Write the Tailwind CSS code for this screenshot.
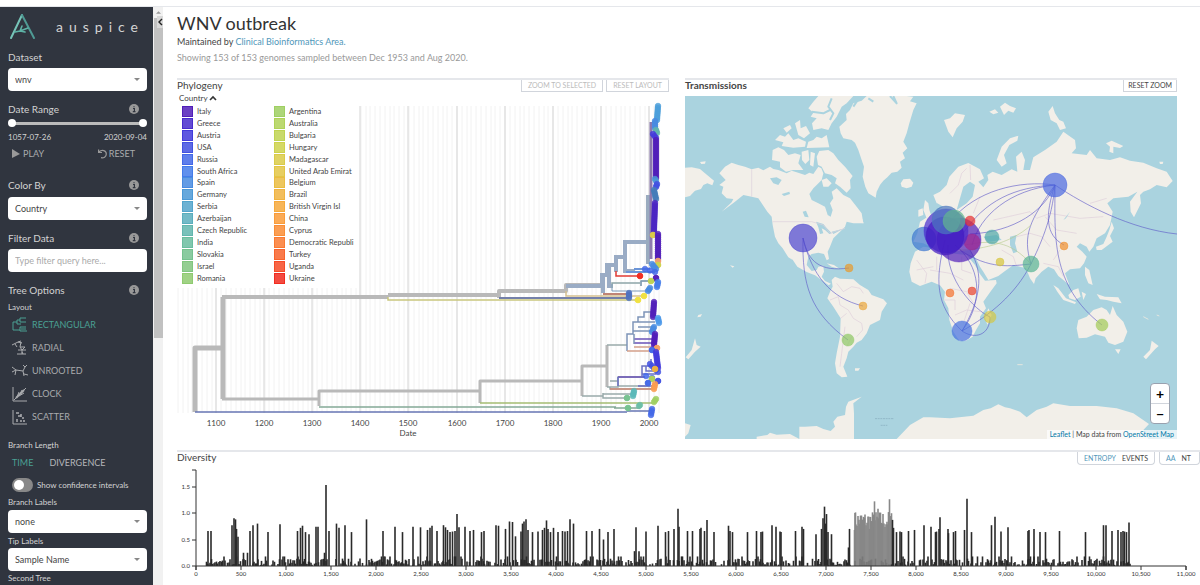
<!DOCTYPE html>
<html lang="en">
<head>
    <meta charset="UTF-8">
    <meta name="viewport" content="width=device-width, initial-scale=1.0">
    <title>auspice - WNV outbreak</title>
    <script src="https://cdn.jsdelivr.net/npm/@tailwindcss/browser@4"></script>
</head>
<body class="bg-white font-['Lato',sans-serif] text-[#444] h-screen overflow-hidden flex flex-col">
    <div class="h-[7px] shrink-0 border-b border-gray-200"></div>

    <div class="flex flex-1 min-h-0">
        <!-- Sidebar -->
        <aside class="w-[153px] shrink-0 overflow-hidden bg-[#30353f] px-2 pr-[6px] text-[#d3d3d3]">
            <div class="h-10 flex items-center">
                <svg class="w-7 h-8 shrink-0" viewBox="0 0 28 32" fill="none" stroke-linecap="round" stroke-linejoin="round">
                    <path d="M3 27L14 4" stroke="#76c4b8" stroke-width="2"/>
                    <path d="M14 4L26 27" stroke="#4f9a94" stroke-width="2"/>
                    <path d="M7 21L12 20L20 17M14 15L12 20L17 21" stroke="#5eb3a6" stroke-width="1.6"/>
                </svg>
                <span class="ml-5 text-sm leading-4 tracking-[6px]">auspice</span>
            </div>

            <label for="dataset" class="flex h-5 items-center text-[10px]">Dataset</label>
            <div class="relative mt-px">
                <select id="dataset" class="block w-full h-[23px] appearance-none rounded-sm bg-white pl-[7px] text-[9px] text-[#444]"><option>wnv</option></select>
                <svg class="pointer-events-none absolute right-[7px] top-[10px] w-[6px] h-[3px]" viewBox="0 0 6 3"><path d="M0 0H6L3 3Z" fill="#888"/></svg>
            </div>

            <div class="mt-2 flex h-5 items-center justify-between pr-2 text-[10px]">
                <h2>Date Range</h2>
                <svg class="w-[10px] h-[10px]" viewBox="0 0 10 10"><circle cx="5" cy="5" r="5" fill="#999"/><path d="M4 4.5H5.4V7.5M3.8 7.7H6.5M5 2.2V3.3" stroke="#30353f" stroke-width="1.2" fill="none"/></svg>
            </div>
            <div class="relative h-2">
                <div class="absolute inset-x-1 top-[3px] h-[3px] bg-[#bbb]"></div>
                <input type="range" aria-label="Start date" min="0" max="100" value="0" class="pointer-events-none absolute inset-0 h-2 w-full appearance-none bg-transparent [&::-webkit-slider-thumb]:pointer-events-auto [&::-webkit-slider-thumb]:h-2 [&::-webkit-slider-thumb]:w-2 [&::-webkit-slider-thumb]:appearance-none [&::-webkit-slider-thumb]:rounded-full [&::-webkit-slider-thumb]:bg-white">
                <input type="range" aria-label="End date" min="0" max="100" value="100" class="pointer-events-none absolute inset-0 h-2 w-full appearance-none bg-transparent [&::-webkit-slider-thumb]:pointer-events-auto [&::-webkit-slider-thumb]:h-2 [&::-webkit-slider-thumb]:w-2 [&::-webkit-slider-thumb]:appearance-none [&::-webkit-slider-thumb]:rounded-full [&::-webkit-slider-thumb]:bg-white">
            </div>
            <div class="mt-1 flex h-3 items-center justify-between text-[8px]"><span>1057-07-26</span><span>2020-09-04</span></div>
            <div class="mt-[3px] flex h-4 items-center justify-between pl-1 pr-3 text-[9px] text-[#a9abae]">
                <button class="flex items-center gap-[3px]"><svg class="w-2 h-[10px]" viewBox="0 0 8 10"><path d="M0 0L8 5L0 9Z" fill="#999"/></svg>PLAY</button>
                <button class="flex items-center gap-[2px]"><svg class="w-[9px] h-[10px]" viewBox="0 0 9 10" fill="none" stroke="#999" stroke-width="1.2"><path d="M0.6 0.5V3.5H4M1 3C4 0 8.3 1.5 8.3 5C8.3 8 5.5 9.2 3 8.7"/></svg>RESET</button>
            </div>

            <div class="mt-[13px] flex h-5 items-center justify-between pr-2 text-[10px]">
                <label for="color-by">Color By</label>
                <svg class="w-[10px] h-[10px]" viewBox="0 0 10 10"><circle cx="5" cy="5" r="5" fill="#999"/><path d="M4 4.5H5.4V7.5M3.8 7.7H6.5M5 2.2V3.3" stroke="#30353f" stroke-width="1.2" fill="none"/></svg>
            </div>
            <div class="relative mt-[2px]">
                <select id="color-by" class="block w-full h-[23px] appearance-none rounded-sm bg-white pl-[7px] text-[9px] text-[#444]"><option>Country</option></select>
                <svg class="pointer-events-none absolute right-[7px] top-[10px] w-[6px] h-[3px]" viewBox="0 0 6 3"><path d="M0 0H6L3 3Z" fill="#888"/></svg>
            </div>

            <div class="mt-2 flex h-5 items-center justify-between pr-2 text-[10px]">
                <label for="filter">Filter Data</label>
                <svg class="w-[10px] h-[10px]" viewBox="0 0 10 10"><circle cx="5" cy="5" r="5" fill="#999"/><path d="M4 4.5H5.4V7.5M3.8 7.7H6.5M5 2.2V3.3" stroke="#30353f" stroke-width="1.2" fill="none"/></svg>
            </div>
            <input id="filter" type="text" placeholder="Type filter query here..." class="mt-px block w-full h-[23px] rounded-sm bg-white px-[7px] text-[9px] placeholder:text-[#aaa]">

            <div class="mt-2 flex h-5 items-center justify-between pr-2 text-[10px]">
                <h2>Tree Options</h2>
                <svg class="w-[10px] h-[10px]" viewBox="0 0 10 10"><circle cx="5" cy="5" r="5" fill="#999"/><path d="M4 4.5H5.4V7.5M3.8 7.7H6.5M5 2.2V3.3" stroke="#30353f" stroke-width="1.2" fill="none"/></svg>
            </div>
            <h3 class="mt-px flex h-3 items-center text-[8px]">Layout</h3>
            <div class="pl-1 text-[9px] text-[#a9abae]">
                <button class="flex h-[23px] w-full items-center gap-1 text-[#4aa093]">
                    <svg class="w-4 h-4" viewBox="0 0 16 16" fill="none" stroke="currentColor"><path d="M5 5H1V13H5M5 3V7M5 3H8V1H14M8 3V5H14M5 7H9M5 13H8M8 10V14M8 10H14M8 14H15M9 12H14"/></svg>RECTANGULAR
                </button>
                <button class="flex h-[23px] w-full items-center gap-1">
                    <svg class="w-4 h-4" viewBox="0 0 16 16" fill="none" stroke="currentColor"><path d="M0 5L6 2L10 3M6 2L9 1M3 4L5 7M9 2L8 7H13M8 7L10 10V14M5 14H14M6 10H14M10 10L13 7M11 14L10 12"/></svg>RADIAL
                </button>
                <button class="flex h-[23px] w-full items-center gap-1">
                    <svg class="w-4 h-4" viewBox="0 0 16 16" fill="none" stroke="currentColor"><path d="M0 4L4 7L3 12M4 7L11 8M11 8L13 4L15 2M13 4L11 2M11 8L12 13M12 11L16 12M0 9L4 7"/></svg>UNROOTED
                </button>
                <button class="flex h-[23px] w-full items-center gap-1">
                    <svg class="w-4 h-4" viewBox="0 0 16 16" fill="none" stroke="currentColor"><path d="M1 1V15H15M2 14L14 2M5 11L7 6M8 8L10 4M7 10L12 7"/><path d="M4 12L12 4" stroke-width="2"/></svg>CLOCK
                </button>
                <button class="flex h-[23px] w-full items-center gap-1">
                    <svg class="w-4 h-4" viewBox="0 0 16 16" fill="none" stroke="currentColor"><path d="M1 1V15H15"/><path d="M4 4H7M6 7H9M9 5V8M10 9H12M4 12H6M8 12H10M12 11V13M5 10V11" stroke-width="1.6"/></svg>SCATTER
                </button>
            </div>

            <h3 class="mt-[11px] flex h-3 items-center text-[8px]">Branch Length</h3>
            <div class="mt-1 flex h-4 items-center gap-4 pl-1 text-[9px] text-[#b5b7ba]">
                <button class="text-[#4aa093]">TIME</button>
                <button>DIVERGENCE</button>
            </div>
            <div class="mt-[7px] flex h-[14px] items-center gap-1 pl-1">
                <input id="confidence" type="checkbox" class="relative h-[14px] w-[21px] appearance-none rounded-full bg-[#888] before:absolute before:left-[2px] before:top-[2px] before:h-[10px] before:w-[10px] before:rounded-full before:bg-white checked:before:left-[9px]">
                <label for="confidence" class="text-[8px]">Show confidence intervals</label>
            </div>
            <label for="branch-labels" class="mt-1 flex h-3 items-center text-[8px]">Branch Labels</label>
            <div class="relative mt-[2px]">
                <select id="branch-labels" class="block w-full h-[23px] appearance-none rounded-sm bg-white pl-[7px] text-[9px] text-[#444]"><option>none</option></select>
                <svg class="pointer-events-none absolute right-[7px] top-[10px] w-[6px] h-[3px]" viewBox="0 0 6 3"><path d="M0 0H6L3 3Z" fill="#888"/></svg>
            </div>
            <label for="tip-labels" class="mt-[2px] flex h-3 items-center text-[8px]">Tip Labels</label>
            <div class="relative mt-px">
                <select id="tip-labels" class="block w-full h-[23px] appearance-none rounded-sm bg-white pl-[7px] text-[9px] text-[#444]"><option>Sample Name</option></select>
                <svg class="pointer-events-none absolute right-[7px] top-[10px] w-[6px] h-[3px]" viewBox="0 0 6 3"><path d="M0 0H6L3 3Z" fill="#888"/></svg>
            </div>
            <h3 class="mt-px flex h-3 items-center text-[8px]">Second Tree</h3>
        </aside>

        <!-- Scrollbar and collapse handle -->
        <div class="relative w-[10px] shrink-0 bg-[#f1f1f1]">
            <svg class="absolute left-[3px] top-1 w-[5px] h-[3px]" viewBox="0 0 6 3"><path d="M0 3H6L3 0Z" fill="#999"/></svg>
            <div class="mt-[11px] ml-px h-[320px] bg-[#c1c1c1]"></div>
            <button class="absolute right-0 top-[9px] h-3 w-[6px] bg-[#d8d8d8]" aria-label="Collapse sidebar"><svg viewBox="0 0 6 12" fill="none" stroke="#222" stroke-width="1.4"><path d="M5 3L2 6L5 9"/></svg></button>
        </div>

        <!-- Main -->
        <main class="min-w-0 flex-1 overflow-hidden pl-[14px]">
            <header class="h-[71px] pt-1">
                <h1 class="text-[18px] leading-6 text-[#333]">WNV outbreak</h1>
                <p class="mt-px text-[9px] leading-3">Maintained by <a href="#" class="text-[#5097ba]">Clinical Bioinformatics Area.</a></p>
                <p class="mt-1 text-[9px] leading-3 text-[#999]">Showing 153 of 153 genomes sampled between Dec 1953 and Aug 2020.</p>
            </header>

            <div class="mr-[23px] grid grid-cols-2 gap-4">
                <section class="border-t-2 border-gray-200">
                    <div class="flex h-4 items-start justify-between">
                        <h2 class="text-[10px] leading-[11px]">Phylogeny</h2>
                        <div class="flex gap-[3px] text-[7px] text-[#bbb]">
                            <button class="h-3 border border-t-0 border-gray-300 px-[6px]">ZOOM TO SELECTED</button>
                            <button class="h-3 border border-t-0 border-gray-300 px-[6px]">RESET LAYOUT</button>
                        </div>
                    </div>
                    <svg id="tree" class="block h-auto w-full overflow-visible" viewBox="177 96 492 343" font-size="8" fill="#444">
                        <g id="grid"></g>
                        <rect x="177" y="96" width="180" height="192" fill="#fff"/>
                        <g id="legend" font-size="7.5"></g>
                        <text x="179" y="101">Country</text>
                        <path d="M210 100L213 97L216 100" fill="none" stroke="#333" stroke-width="1.6"/>
                        <g fill="none" stroke="#b9b9b9" stroke-linejoin="round">
                            <path d="M195 412V348H223M223 348V297" stroke-width="5"/>
                            <path d="M223 348V399" stroke-width="5"/>
                            <path d="M222 297H388M388 295H499" stroke-width="4"/>
                            <path d="M222 399H319M319 406V391H480M480 403V381H582M582 396V366H607V345M607 366V387" stroke-width="3"/>
                            <path d="M499 298V291H566V285H602" stroke-width="4"/>
                        </g>
                        <g fill="none" stroke-width="1.5">
                            <path d="M195 412H627M627 411H650" stroke="#6775b4"/>
                            <path d="M319 407H616M614 408H640" stroke="#84a996"/>
                            <path d="M480 403H655" stroke="#a5bd72"/>
                            <path d="M388 297V300H638" stroke="#c9c67d"/>
                            <path d="M566 291V296H644" stroke="#d5c08f"/>
                            <path d="M499 298H629" stroke="#7480aa" stroke-width="2"/>
                            <path d="M607 345H627M582 396H603M603 393V398H625M603 394H636M607 387H618V377H645M610 387V389H655M610 381H618V386H650" stroke="#9aa"/>
                            <path d="M610 389H655" stroke="#d08a75"/>
                            <path d="M618 377H645M634 339H655M634 343H655" stroke="#6a52b8"/>
                            <path d="M627 351V334H633V322H638V317H644V312H653M638 322H655M638 327H652M633 331H652M634 334V344" stroke="#7d94b8"/>
                            <path d="M627 351H654M634 347H655" stroke="#d3a08a"/>
                            <path d="M618 377V386M642 378V366H651V359M642 374H656M646 366V371H657M638 386H655" stroke="#6a70c4"/>
                            <path d="M612 288V283H640M641 286V281H655" stroke="#8da5a8"/>
                        </g>
                        <g fill="none" stroke="#9aacc5" stroke-width="4">
                            <path d="M566 286H602V275H607V265H616V257H625V242H648M603 277V293M609 266V288M616 258V272M625 243V271H635"/>
                            <path d="M648 264V195" stroke="#9aabbf"/>
                            <path d="M651 259V122" stroke="#8d7aae" stroke-width="3"/>
                        </g>
                        <g fill="none">
                            <path d="M616 271V276H640" stroke="#e23b34" stroke-width="1.5"/>
                            <path d="M603 294H630" stroke="#c08476" stroke-width="2"/>
                            <path d="M626 272H655M634 269H650M640 272H655" stroke="#6b95d8" stroke-width="2"/>
                            <path d="M641 286V281H655M612 284V291H650" stroke="#7b98b8"/>
                        </g>
                        <g id="tips"></g>
                        <g id="years" text-anchor="middle"></g>
                        <text x="408" y="436" text-anchor="middle">Date</text>
                    </svg>
                </section>

                <section class="relative border-t-2 border-gray-200">
                    <div class="flex h-4 items-start justify-between">
                        <h2 class="text-[10px] font-bold leading-[11px]">Transmissions</h2>
                        <button class="h-3 border border-t-0 border-gray-300 px-1 text-[7px]">RESET ZOOM</button>
                    </div>
                    <svg class="block h-auto w-full bg-[#aad3df]" viewBox="0 0 1476 1029" stroke-linejoin="round">
                        <!-- Americas, Greenland, north Atlantic -->
                        <g transform="translate(-15 -78)" fill="#f2efe9">
                            <path d="M118 310L135 290L155 278L175 285L195 290L215 298L235 293L250 301L270 290L280 297L295 300L320 310L335 302L350 307L375 315L388 308L400 312L415 290L424 295L430 310L425 330L410 345L400 355L388 372L395 390L415 400L435 410L443 435L452 440L458 420L450 400L460 385L455 365L470 355L490 375L510 385L530 410L545 430L550 460L520 460L500 455L495 470L480 485L460 505L450 530L443 545L447 567L440 571L432 552L415 548L395 552L385 560L380 585L395 603L410 600L415 590L430 588L432 605L425 620L435 633L453 641L446 646L425 630L405 616L380 606L352 590L335 565L322 543L338 570L325 562L308 535L295 520L285 500L278 465L275 440L262 425L245 400L235 385L215 380L190 375L165 395L125 425L155 397L160 387L140 385L125 370L130 350L118 345L137 330Z"/>
                            <path d="M15 293L35 292L60 297L75 310L85 318L102 332L97 346L82 340L70 345L63 357L45 362L30 378L15 382ZM60 276L77 274L75 281L64 282Z"/>
                            <path d="M560 78L545 92L520 100L510 120L498 132L500 150L478 170L482 190L490 205L515 210L525 218L535 240L545 270L552 290L548 320L556 350L565 370L587 383L590 365L600 345L610 332L622 322L635 308L652 305L665 293L660 275L675 265L668 248L682 235L670 215L680 190L688 160L700 120L710 100L690 94L700 80L680 78Z"/>
                            <path d="M385 115L400 95L415 78L520 78L500 100L485 110L470 140L455 160L445 180L425 175L400 180L396 160L410 145L392 140L400 128Z"/>
                            <path d="M440 195L448 232L380 234L385 215L400 210L410 200L425 205ZM285 210L300 195L315 200L325 190L340 210L355 205L378 215L375 230L340 233L305 228L310 217ZM310 175L330 165L335 175L320 188ZM345 160L360 150L362 175L378 168L390 190L372 205L355 195ZM278 240L295 232L312 240L325 255L345 250L362 255L355 280L370 300L340 300L318 305L300 292L300 275L276 270ZM365 245L385 240L388 270L376 282L366 270ZM392 245L405 250L400 290L390 285Z"/>
                            <path d="M410 260L418 243L445 240L460 250L475 270L495 290L518 318L510 330L512 355L500 368L480 350L465 340L470 325L455 315L435 310L425 290L414 285ZM425 330L440 325L455 340L445 350L430 350ZM530 425L540 430L551 460L530 457L522 450Z"/>
                            <path d="M662 340L670 328L690 326L700 338L695 350L680 355L665 350ZM735 390L745 400L748 420L755 440L740 445L730 420ZM715 420L728 415L730 435L715 440Z"/>
                            <!-- Great lakes and Canadian lakes -->
                            <path d="M408 455L430 462L440 474L455 490L448 492L435 480L425 475L430 490L420 492L415 472ZM455 485L490 476L460 492ZM270 325L290 322L305 330L295 345L280 340ZM305 372L328 365L330 372L312 378ZM368 425L378 422L386 442L374 440Z" fill="#aad3df"/>
                            <path d="M395 125L430 130L450 120M455 85L445 110L460 130L450 150M475 145L465 175M540 80L520 110M565 85L580 95M630 78L650 100L640 78" fill="none" stroke="#aad3df" stroke-width="6"/>
                            <path d="M215 298V380M278 455H395L430 465M430 465L450 490L495 475" fill="none" stroke="#ddd0dc" stroke-width="2"/>
                            <path d="M455 630L465 620L480 626L520 628L540 645L565 660L575 675L610 688L621 700L605 725L600 750L570 765L560 790L545 810L530 818L520 830L505 845L500 865L490 890L500 915L502 920L485 922L470 910L465 880L470 850L480 800L482 745L460 710L442 685L450 665L458 650ZM440 580L462 585L478 596L455 590ZM525 895H540L535 902H525Z"/>
                            <path d="M470 640L490 665L515 650L540 655L550 670M450 690L475 680L480 705L505 720L520 745L545 760L548 780L530 800M482 745L500 730M495 770L485 850L480 890M500 830L515 800" fill="none" stroke="#dfcedb" stroke-width="2"/>
                            <path d="M45 805L50 825L62 830L45 845L25 868L17 862L35 840ZM55 735L66 732L62 740L52 742ZM150 586L163 589L158 593Z"/>
                            <path d="M15 1060L32 1065L25 1090L15 1100ZM230 1107V1100L262 1095L270 1088L290 1094L330 1092L358 1107V1070H375L410 1068L430 1077L452 1083L465 1070L460 1055L472 1040L495 1035L498 1010L505 995L545 980L520 1000L522 1030V1107Z"/>
                            <path d="M585 1046H642M602 1066H622" stroke="#91b8c8" stroke-width="3" stroke-dasharray="6 2"/>
                        </g>
                        <!-- Europe, Africa, Asia, Oceania, Antarctica -->
                        <g transform="translate(735 -78)" fill="#f2efe9">
                            <path d="M20 385L30 365L50 345L58 320L85 290L115 279L150 298L162 325L145 335L160 352L175 330L172 315L188 305L215 315L245 298L262 305L258 260L275 245L285 270L280 300L300 300L310 262L345 240L380 215L400 185L435 210L438 235L425 250L470 255L480 240L500 265L540 270L570 262L600 272L640 278L680 295L710 305L728 333L710 352L680 345L660 358L640 365L630 375L633 400L612 442L602 425L600 395L622 365L595 380L550 385L532 400L548 425L540 465L525 490L500 505L490 530L478 545L470 530L450 520L440 530L457 545L470 560L462 580L450 595L420 598L405 610L418 645L400 630L385 618L372 598L355 590L335 605L317 625L312 642L300 625L288 595L250 585L222 605L205 618L175 630L160 605L150 590L140 570L120 540L60 545L20 540L-20 520L-50 515L-38 490L-30 455L10 430L55 400L40 410L22 400Z"/>
                            <path d="M-45 545L-20 530L20 535L60 550L110 555L135 585L150 612L165 632L198 630L200 640L178 670L160 695L168 715L150 740L150 760L138 780L128 800L108 812L88 812L70 785L58 750L55 715L42 690L45 665L30 646L5 635L-30 648L-55 635L-62 605L-58 580ZM165 742L175 715L185 735L172 765Z"/>
                            <path d="M200 270L215 230L240 205L265 197L262 212L238 225L222 255L230 280L215 290ZM42 150L60 145L75 130L105 135L98 155L80 175L68 202L55 185ZM355 125L368 108L375 130L388 150L400 155L408 175L390 180L380 160L362 150ZM178 125L195 118L205 128L190 133ZM210 110L225 98L240 108L258 115L250 128L235 122L222 135ZM528 220L545 212L580 228L570 234L550 230L550 250L538 245L540 230ZM688 275L700 275L698 282H690Z"/>
                            <path d="M20 400L10 375L30 365L50 395ZM545 455L552 475L540 498L548 515L535 525L515 540H500L498 530L520 522L530 500L538 480Z"/>
                            <path d="M370 645L385 655L408 685L438 697L435 702L400 690L382 665ZM415 675L430 660L445 655L452 680L435 690L418 685ZM465 590L478 600L488 645L475 640L465 615ZM455 665L468 672L460 690ZM500 672L525 680L565 682L575 700L550 695L530 690L510 688Z"/>
                            <path d="M445 750L470 740L490 720L515 712L530 720L540 735L548 708L560 735L580 755L592 785L580 815L555 825L535 818L525 800L495 793L470 803L446 805L440 775ZM555 838L572 838L565 852ZM665 812L675 820L686 828L675 838L648 868L640 860L660 840Z"/>
                            <path d="M-100 1107L-60 1065L-20 1042L0 1042L60 1045L130 1037L160 1020L182 1015L205 1003L225 1012L240 1015L270 1025L290 1042L320 1020L350 1010L370 1000L420 1008L500 1008L560 1015L610 1030L657 1062L640 1080L655 1107Z"/>
                            <path d="M60 370L85 345L95 310L110 295M120 285L122 330M150 380L130 430M190 450L235 440L300 425L320 445L360 430L420 440L450 445L520 440M260 500L300 490L335 500L360 530M215 540L250 560L260 590M345 440L380 480L440 490M390 540L370 570M0 600L60 610L100 630M40 690H75V720M60 655L110 665L130 700M75 735L110 720L150 725M-40 600L10 590M20 560V600M95 560V600L125 610M100 760L120 700M340 580L385 590L400 620M480 400L530 385M-40 570L-10 610L-15 640" fill="none" stroke="#dfcedb" stroke-width="2"/>
                            <path d="M240 500L260 495L255 520L262 545L250 550L240 525ZM160 500L200 495L215 510L175 515ZM400 450L420 425L408 445ZM100 350L120 335L135 345L128 380L110 400L80 420L90 385Z" fill="#aad3df"/>
                            <path d="M640 740L655 748M680 735L688 738M262 884H278" fill="none" stroke="#e3e6df" stroke-width="3"/>
                        </g>
                        <!-- Transmission lines and demes -->
                        <g transform="scale(3) translate(-685 -96)">
                            <g fill="none" stroke="#5a55c8" stroke-opacity=".6">
                                <path d="M803 238C802 285 810 312 848 340M803 238C812 275 830 298 863 306M803 238C808 262 820 272 849 268"/>
                                <path d="M1055 185C1020 180 975 190 950 222M1055 185C1015 187 985 200 962 235M1055 185C1010 190 980 215 972 245M1055 185C1045 210 1015 232 970 234M1055 185C1030 220 1022 235 1031 264M1055 185C1045 215 1045 235 1064 245M1055 185C1055 235 1050 285 1102 325M1055 185C1052 220 1040 245 1031 264M1055 185C1085 205 1130 229 1177 234"/>
                                <path d="M945 240C935 280 935 305 962 331M955 245C980 265 985 300 962 331M948 245C945 280 975 310 990 317M960 250C990 270 1010 266 1031 264M1031 264C1015 295 990 315 962 331M962 331C975 340 990 335 990 317M970 250C985 275 980 300 962 331"/>
                                <path d="M1031 264C1010 240 990 240 965 245M960 250C975 250 1010 245 1031 225" stroke="#b5cc8c"/>
                            </g>
                            <g id="demes" stroke-opacity=".4"></g>
                        </g>
                    </svg>
                    <div class="absolute bottom-[15px] right-[7px] flex w-5 flex-col divide-y divide-gray-300 rounded-sm border border-gray-400 bg-white text-sm font-bold leading-[19px] text-black">
                        <button aria-label="Zoom in">+</button>
                        <button aria-label="Zoom out">&minus;</button>
                    </div>
                    <p class="absolute bottom-0 right-0 bg-white/70 px-[3px] text-[7px] leading-[9px]"><a href="#" class="text-[#0078a8]">Leaflet</a> | Map data from <a href="#" class="text-[#0078a8]">OpenStreet Map</a></p>
                </section>
            </div>

            <section class="mt-[11px] border-t-2 border-gray-200">
                <div class="flex h-[15px] items-start justify-between">
                    <h2 class="text-[10px] leading-[11px]">Diversity</h2>
                    <div class="flex gap-1 text-[7px] leading-[12px]">
                        <div class="flex gap-[6px] border border-t-0 border-gray-300 px-[6px] rounded-b-sm"><button class="text-[#5097ba]">ENTROPY</button><button>EVENTS</button></div>
                        <div class="flex gap-[6px] border border-t-0 border-gray-300 pl-[6px] pr-2 rounded-b-sm"><button class="text-[#5097ba]">AA</button><button>NT</button></div>
                    </div>
                </div>
                <svg id="entropy" class="block h-auto w-full" viewBox="177 467 1023 118" font-size="6" fill="#333"></svg>
            </section>
        </main>
    </div>

    <script>
        const left = ["Italy", "Greece", "Austria", "USA", "Russia", "South Africa", "Spain", "Germany", "Serbia", "Azerbaijan", "Czech Republic", "India", "Slovakia", "Israel", "Romania"];
        const right = ["Argentina", "Australia", "Bulgaria", "Hungary", "Madagascar", "United Arab Emirat", "Belgium", "Brazil", "British Virgin Isl", "China", "Cyprus", "Democratic Republi", "Turkey", "Uganda", "Ukraine"];
        const colors = ["#511eb8", "#482bcd", "#433bdb", "#4251e0", "#4368e8", "#447cea", "#488be0", "#4c99d6", "#53a5cb", "#5aaebd", "#62b6ae", "#6abd9f", "#75c28f", "#81c67f", "#8fca70", "#9fcf62", "#b0d258", "#bfd351", "#ced24b", "#dacb47", "#e3c544", "#eabc41", "#f0b33f", "#f6a93c", "#fa9c39", "#fa8d35", "#fa7a31", "#f8632c", "#f64b27", "#f12c20"];

        // Tree grid, one major line per century
        let grid = "", years = "";
        for (let i = 0; i < 101; i++) {
            const x = Math.round(178 + i * 4.81);
            grid += `<path d="M${x} 106V413" stroke="#f2f2f2"/>`;
        }
        for (let i = 0; i < 10; i++) {
            const x = Math.round(216 + i * 48.1);
            grid += `<path d="M${x} 106V413" stroke="#d5d5d5"/>`;
            years += `<text x="${x}" y="426">${1100 + i * 100}</text>`;
        }
        document.getElementById("grid").innerHTML = grid;
        document.getElementById("years").innerHTML = years;

        let legend = "";
        [left, right].forEach((names, col) => names.forEach((name, i) => {
            const x = 182 + col * 92, y = Math.round(106 + i * 11.9), c = colors[col * 15 + i];
            legend += `<rect x="${x + .5}" y="${y + .5}" width="10" height="10" fill="${c}" fill-opacity=".85" stroke="${c}"/><text x="${x + 15}" y="${y + 8}">${name}</text>`;
        }));
        document.getElementById("legend").innerHTML = legend;

        // Runs of tips: x at top, y from, y to, x at bottom, colour
        const runs = [
            [658, 106, 120, 657, "#4c9fda"], [655, 121, 128, 655, "#488be0"], [656, 130, 133, 657, "#62b6ae"], [653, 134, 138, 656, "#433bdb"],
            [656, 140, 178, 656, "#511eb8"], [655, 179, 181, 656, "#4c99d6"], [657, 184, 187, 656, "#4251e0"], [654, 190, 199, 656, "#447cb8"],
            [655, 203, 231, 654, "#4a24c2"], [653, 235, 235, 653, "#dacb47"], [658, 234, 259, 658, "#511eb8"], [658, 261, 261, 658, "#f0a070"],
            [658, 265, 265, 658, "#ced24b"], [652, 264, 269, 656, "#488be0"], [645, 269, 272, 655, "#4368e8"], [640, 276, 276, 640, "#f12c20"], [656, 278, 278, 656, "#511eb8"],
            [651, 281, 281, 651, "#bfd351"], [658, 282, 287, 657, "#447cea"], [650, 288, 291, 648, "#488be0"], [629, 293, 298, 629, "#4f72c0"],
            [644, 296, 296, 644, "#f0e040"], [638, 300, 300, 638, "#f0e040"],
            [654, 302, 317, 653, "#511eb8"], [658, 318, 323, 659, "#4c99ea"], [654, 327, 332, 652, "#488be0"], [655, 334, 345, 654, "#511eb8"],
            [657, 348, 348, 657, "#f6a060"], [652, 350, 350, 652, "#4368e8"], [656, 352, 368, 658, "#433bdb"], [650, 364, 372, 658, "#4251e0"],
            [655, 369, 369, 655, "#f0b33f"], [646, 376, 378, 652, "#4368e8"], [652, 379, 379, 652, "#b0d258"], [658, 381, 381, 658, "#4251e0"], [648, 383, 383, 648, "#4368e8"],
            [655, 384, 389, 654, "#fa9c50"], [634, 391, 396, 633, "#5ab8b8"], [627, 398, 398, 627, "#75c28f"], [656, 399, 402, 654, "#9fcf62"],
            [640, 405, 406, 639, "#6abda5"], [628, 408, 408, 628, "#75c28f"], [652, 409, 415, 651, "#4368e8"]
        ];
        document.getElementById("tips").innerHTML = runs.map(([x0, y0, y1, x1, c]) => {
            let out = "";
            const n = Math.max(1, Math.round((y1 - y0) / 2));
            for (let i = 0; i <= n; i++) {
                out += `<circle cx="${x0 + (x1 - x0) * i / n}" cy="${y0 + (y1 - y0) * i / n}" r="2.8" fill="${c}" fill-opacity=".85" stroke="${c}" stroke-width=".6"/>`;
            }
            return out;
        }).join("");

        const demes = [
            [803, 238, 14, "#4d46cf"], [924, 239, 12, "#3f78d0"], [959, 240, 22, "#511eb8"], [972, 242, 8, "#a02890"], [946, 231, 22, "#482bcd"], [945, 236, 19, "#4018c0"],
            [970, 221, 5, "#e63030"], [946, 220, 14, "#4c78c0"], [954, 221, 11, "#62b68e"], [992, 237, 7, "#4fa8a8"],
            [1055, 185, 12, "#4a68e0"], [1064, 246, 4, "#f08f2c"], [1031, 264, 8, "#57b393"], [1000, 262, 4, "#d6c43a"], [950, 293, 4, "#f4702c"],
            [972, 291, 4, "#e8402c"], [990, 317, 6, "#d3c845"], [962, 331, 10, "#4570e0"], [1102, 325, 6, "#a3cb56"],
            [849, 268, 4, "#e89a2c"], [863, 306, 4, "#eaa63c"], [848, 340, 6, "#8dc763"]
        ];
        document.getElementById("demes").innerHTML = demes.map(([x, y, r, c]) => `<circle cx="${x}" cy="${y}" r="${r}" fill="${c}" fill-opacity=".7" stroke="${c}"/>`).join("");

        // Entropy bars: genome position, value
        const bars = [
            [131, .66], [168, .66], [400, .77], [423, .9], [437, .88], [452, .7], [467, .55], [530, .25], [570, .25], [598, .66], [634, .77], [685, .8], [802, .64], [933, .79],
            [1130, .66], [1159, .72], [1181, .76], [1217, .64], [1254, .6], [1334, .74], [1356, .74], [1430, .25], [1443, 1.53], [1480, .66], [1560, .8], [1589, .72], [1655, .77], [1728, .64],
            [1895, .88], [2078, .66], [2209, .74], [2296, .64], [2413, .74], [2493, .73], [2573, .68], [2602, .72], [2624, .76], [2675, .66], [2748, .77], [2770, .73], [2792, .68],
            [2820, .64], [2850, .65], [2880, .66], [2901, .98], [2923, .73], [2990, .74], [3047, .66], [3084, .68], [3171, .64], [3200, .66], [3331, .77], [3361, .76], [3441, .7],
            [3485, .84], [3514, .83], [3550, .56], [3610, .65], [3625, .8], [3645, .84], [3668, .88], [3690, .68], [3740, .64], [3800, .65], [3850, .68], [3870, .72], [3894, .86], [3910, .7], [3940, .64],
            [3970, .72], [4020, .64], [4070, .66], [4100, .65], [4125, .66], [4156, .88], [4192, .8], [4337, .66], [4400, .66], [4483, .7], [4530, .5], [4577, .64], [4643, .7],
            [4870, .28], [4890, .73], [4920, .28], [5000, .65], [5131, .76], [5219, .64], [5248, .66], [5313, .7], [5357, 1.08], [5368, .74], [5460, .66], [5518, .66], [5598, .7], [5612, .72], [5650, .66], [5678, .87],
            [5758, .64], [5919, .76], [5933, .66], [5962, .64], [6130, .64], [6226, .66], [6276, .64], [6292, .65], [6400, .77], [6443, .74], [6487, .65], [6501, .64], [6661, .66], [6734, .74], [6750, .7],
            [6887, .6], [6950, .7], [6965, .9], [6982, 1.12], [6995, .8], [7004, .98], [7020, .64], [7062, .6], [7260, .7], [7250, .35],
            [7740, .87], [7750, .72], [7785, .64], [7820, .65], [7840, .64], [7915, .66], [7985, .68], [8090, .77], [8165, .74], [8215, .64], [8230, .65], [8255, .7], [8269, .92], [8353, .7], [8362, .62],
            [8419, .64], [8440, .66], [8540, .68], [8565, 1.27], [8615, .64], [8841, .77], [8878, .93], [8943, .65], [9020, .73], [9243, .66], [9255, .68], [9313, .7], [9378, .64], [9440, .64],
            [9593, .66], [9886, .64], [10083, .77], [10112, .77], [10180, .66], [10242, .68], [10275, .64], [10300, .66], [10318, .65], [10340, .64], [10364, .82]
        ];
        const px = pos => Math.round((196 + pos * 0.09) * 2) / 2;
        let seed = 7;
        const rand = () => (seed = (seed * 16807) % 2147483647) / 2147483647;
        let chart = "";
        const bar = (pos, v, c) => { chart += `<path d="M${px(pos)} 566V${566 - v * 53}" stroke="${c}" stroke-width="1.6"/>`; };
        for (let pos = 7315; pos < 7740; pos += 10) bar(pos, .68 + rand() * .36, "#888");
        bar(7320, 1.0, "#888");
        bar(7540, 1.22, "#888");
        bar(7580, 1.08, "#888");
        bar(7705, 1.26, "#888");
        for (let pos = 100; pos < 10380; pos += 14) {
            const r = rand();
            if (r > .3) bar(pos, r > .93 ? .18 : .02 + rand() * .12, pos > 7315 && pos < 7730 ? "#777" : "#2a2a2a");
        }
        bars.forEach(([pos, v]) => bar(pos, v, "#2a2a2a"));
        chart += `<path d="M192 470H196V566H1186V570M196 566V570" fill="none" stroke="#333"/>`;
        for (let i = 0; i < 23; i++) {
            chart += `<path d="M${196 + i * 45} 566V570" stroke="#333"/><text x="${196 + i * 45}" y="576" text-anchor="middle">${(i * 500).toLocaleString("en-US")}</text>`;
        }
        ["0.0", "0.5", "1.0", "1.5"].forEach((t, i) => {
            const y = Math.round(566 - i * 26.5);
            chart += `<path d="M192 ${y}H196" stroke="#333"/><text x="190" y="${y + 2}" text-anchor="end">${t}</text>`;
        });
        document.getElementById("entropy").innerHTML = chart;
    </script>
</body>
</html>
